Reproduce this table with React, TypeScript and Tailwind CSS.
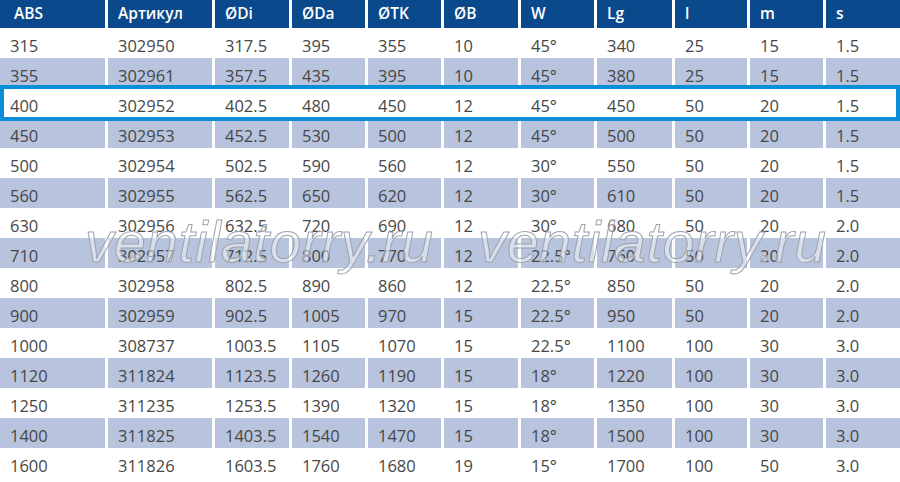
import React from "react";

const headers = ["ABS", "Артикул", "ØDi", "ØDa", "ØTK", "ØB", "W", "Lg", "l", "m", "s"];

const rows: string[][] = [
  ["315", "302950", "317.5", "395", "355", "10", "45°", "340", "25", "15", "1.5"],
  ["355", "302961", "357.5", "435", "395", "10", "45°", "380", "25", "15", "1.5"],
  ["400", "302952", "402.5", "480", "450", "12", "45°", "450", "50", "20", "1.5"],
  ["450", "302953", "452.5", "530", "500", "12", "45°", "500", "50", "20", "1.5"],
  ["500", "302954", "502.5", "590", "560", "12", "30°", "550", "50", "20", "1.5"],
  ["560", "302955", "562.5", "650", "620", "12", "30°", "610", "50", "20", "1.5"],
  ["630", "302956", "632.5", "720", "690", "12", "30°", "680", "50", "20", "2.0"],
  ["710", "302957", "712.5", "800", "770", "12", "22.5°", "760", "50", "20", "2.0"],
  ["800", "302958", "802.5", "890", "860", "12", "22.5°", "850", "50", "20", "2.0"],
  ["900", "302959", "902.5", "1005", "970", "15", "22.5°", "950", "50", "20", "2.0"],
  ["1000", "308737", "1003.5", "1105", "1070", "15", "22.5°", "1100", "100", "30", "3.0"],
  ["1120", "311824", "1123.5", "1260", "1190", "15", "18°", "1220", "100", "30", "3.0"],
  ["1250", "311235", "1253.5", "1390", "1320", "15", "18°", "1350", "100", "30", "3.0"],
  ["1400", "311825", "1403.5", "1540", "1470", "15", "18°", "1500", "100", "30", "3.0"],
  ["1600", "311826", "1603.5", "1760", "1680", "19", "15°", "1700", "100", "50", "3.0"],
];

const gridCols =
  "grid grid-cols-[105px_104px_74px_73px_73px_74px_73px_75px_72px_73px_74px] gap-x-[3px]";

export default function App() {
  return (
    <div
      className="relative w-[900px] h-[482px] bg-white overflow-hidden"
      style={{ fontFamily: '"Open Sans", "Noto Sans", sans-serif' }}
    >
      <div className={`${gridCols} h-[28px]`}>
        {headers.map((h, i) => (
          <div
            key={h}
            className={`bg-[#0a4a8c] text-white text-[15.5px] font-semibold flex items-center ${
              i === 0 ? "pl-[14px]" : "pl-[10px]"
            }`}
          >
            {h}
          </div>
        ))}
      </div>
      <div className="flex flex-col gap-y-[3px]">
        {rows.map((r, ri) => {
          const banded = ri % 2 === 1;
          const highlight = ri === 2;
          return (
            <div key={r[0]} className={`relative ${gridCols} h-[27px]`}>
              {r.map((c, ci) => (
                <div
                  key={ci}
                  className={`${
                    banded ? "bg-[#b8c4dd]" : "bg-white"
                  } text-[#474747] text-[16.5px] flex items-center pl-[10px] pt-[6px]`}
                >
                  {c}
                </div>
              ))}
              {highlight && (
                <div className="absolute left-0 right-0 -top-[3px] -bottom-[6px] border-4 border-[#0b8ed8] pointer-events-none z-10" />
              )}
            </div>
          );
        })}
      </div>
      <div
        className="absolute left-[85px] top-[214px] text-[57px] leading-none italic tracking-[0.5px] text-[rgba(255,255,255,0.45)] [-webkit-text-stroke:1px_#9ca3ad] pointer-events-none whitespace-nowrap"
        style={{ fontFamily: '"Liberation Sans", Arial, sans-serif' }}
      >
        ventilatorry.ru
      </div>
      <div
        className="absolute left-[478px] top-[214px] text-[57px] leading-none italic tracking-[0.5px] text-[rgba(255,255,255,0.45)] [-webkit-text-stroke:1px_#9ca3ad] pointer-events-none whitespace-nowrap"
        style={{ fontFamily: '"Liberation Sans", Arial, sans-serif' }}
      >
        ventilatorry.ru
      </div>
    </div>
  );
}
